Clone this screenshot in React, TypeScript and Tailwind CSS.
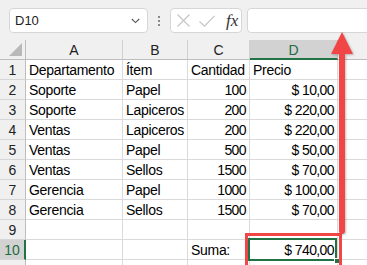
import React from "react";

const FONT = { fontFamily: '"Liberation Sans", Arial, sans-serif' };

type Row = { n: number; a: string; b: string; c: string; d: string };

const rows: Row[] = [
  { n: 1, a: "Departamento", b: "Ítem", c: "Cantidad", d: "Precio" },
  { n: 2, a: "Soporte", b: "Papel", c: "100", d: "$ 10,00" },
  { n: 3, a: "Soporte", b: "Lapiceros", c: "200", d: "$ 220,00" },
  { n: 4, a: "Ventas", b: "Lapiceros", c: "200", d: "$ 220,00" },
  { n: 5, a: "Ventas", b: "Papel", c: "500", d: "$ 50,00" },
  { n: 6, a: "Ventas", b: "Sellos", c: "1500", d: "$ 70,00" },
  { n: 7, a: "Gerencia", b: "Papel", c: "1000", d: "$ 100,00" },
  { n: 8, a: "Gerencia", b: "Sellos", c: "1500", d: "$ 70,00" },
  { n: 9, a: "", b: "", c: "", d: "" },
  { n: 10, a: "", b: "", c: "", d: "" },
  { n: 11, a: "", b: "", c: "", d: "" },
];

function Cell({ children, right = false, num = false }: { children?: React.ReactNode; right?: boolean; num?: boolean }) {
  return (
    <div
      className={
        "h-[20px] border-r border-b border-[#dadada] px-[3px] leading-[21px] whitespace-nowrap overflow-visible text-[14px] text-black " +
        (right ? "text-right " : "text-left ") +
        (num ? "tracking-[-0.6px]" : "tracking-[-0.3px]")
      }
    >
      {children}
    </div>
  );
}

export default function App() {
  return (
    <div className="relative w-[367px] h-[265px] overflow-hidden bg-white" style={FONT}>
      {/* Toolbar */}
      <div className="h-[40px] bg-[#f0f0f0] flex items-start pt-[8px] pl-[9px]">
        <div className="w-[139px] h-[25px] shrink-0 bg-white border border-[#d6d6d6] rounded-[4px] flex items-center justify-between pl-[5px] pr-[7px]">
          <span className="text-[13px] text-[#222] leading-none">D10</span>
          <svg width="9" height="6" viewBox="0 0 9 6">
            <path d="M0.8 1 L4.5 4.6 L8.2 1" fill="none" stroke="#555" strokeWidth="1.1" />
          </svg>
        </div>
        <div className="w-[22px] h-[25px] shrink-0 flex flex-col items-center justify-center gap-[2px]">
          <div className="w-[2px] h-[2px] bg-[#8a8a8a]" />
          <div className="w-[2px] h-[2px] bg-[#8a8a8a]" />
          <div className="w-[2px] h-[2px] bg-[#8a8a8a]" />
        </div>
        <div className="w-[72px] h-[25px] shrink-0 bg-white border border-[#d6d6d6] rounded-[4px] flex items-center pl-[6px]">
          <svg width="13" height="13" viewBox="0 0 13 13">
            <path d="M0.5 0.5 L12.5 12.5 M12.5 0.5 L0.5 12.5" stroke="#c4c4c4" strokeWidth="1.1" fill="none" />
          </svg>
          <svg width="16" height="12" viewBox="0 0 16 12" className="ml-[9px]">
            <path d="M0.5 6.5 L5.5 11.2 L15.5 0.8" stroke="#c4c4c4" strokeWidth="1.1" fill="none" />
          </svg>
          <span
            className="ml-[11px] text-[17px] italic text-[#333] leading-none"
            style={{ fontFamily: '"Liberation Serif", "Times New Roman", serif' }}
          >
            fx
          </span>
        </div>
        <div className="ml-[5px] w-[140px] h-[25px] shrink-0 bg-white border border-[#d6d6d6] rounded-l-[4px]" />
      </div>

      {/* Grid */}
      <div className="grid grid-cols-[26px_97px_65px_62px_88px_1fr]">
        {/* header row */}
        <div className="h-[20px] bg-[#f0f0f0] border-r border-b border-[#bdbdbd] relative">
          <svg width="14" height="14" viewBox="0 0 14 14" className="absolute right-[2px] bottom-[2px]">
            <path d="M13 0 L13 13 L0 13 Z" fill="#b9b9b9" />
          </svg>
        </div>
        {["A", "B", "C"].map((l) => (
          <div
            key={l}
            className="h-[20px] bg-[#f0f0f0] border-r border-r-[#d0d0d0] border-b border-b-[#bdbdbd] text-center text-[14px] leading-[21px] text-[#222]"
          >
            {l}
          </div>
        ))}
        <div className="h-[20px] bg-[#d2d2d2] border-r border-r-[#bdbdbd] border-b-2 border-b-[#217346] text-center text-[14px] leading-[21px] text-[#1e6b41]">
          D
        </div>
        <div className="h-[20px] bg-[#f0f0f0] border-b border-b-[#bdbdbd]" />

        {rows.map((r) => {
          const sel = r.n === 10;
          return (
            <React.Fragment key={r.n}>
              <div
                className={
                  "h-[20px] border-b border-b-[#d6d6d6] text-center text-[14px] leading-[21px] " +
                  (sel
                    ? "bg-[#d2d2d2] border-r-2 border-r-[#217346] text-[#1e6b41]"
                    : "bg-[#f0f0f0] border-r border-r-[#bdbdbd] text-[#222]")
                }
              >
                {r.n === 11 ? "" : r.n}
              </div>
              <Cell>{r.a}</Cell>
              <Cell>{r.b}</Cell>
              {r.n === 1 ? <Cell>{r.c}</Cell> : r.n === 10 ? <Cell>Suma:</Cell> : <Cell right num>{r.c}</Cell>}
              {r.n === 1 ? <Cell>{r.d}</Cell> : r.n === 10 ? <Cell right num>$ 740,00</Cell> : <Cell right num>{r.d}</Cell>}
              <div className="h-[20px] border-b border-[#dadada]" />
            </React.Fragment>
          );
        })}
      </div>

      {/* Selection of D10 */}
      <div className="absolute left-[248px] top-[238px] w-[89px] h-[23px] border-2 border-[#217346] pointer-events-none" />
      <div className="absolute left-[334px] top-[258px] w-[6px] h-[6px] bg-[#217346] border border-white pointer-events-none" />

      {/* Red annotation rectangle */}
      <div className="absolute left-[245px] top-[233px] w-[97px] h-[40px] border-[3px] border-[#f24646] pointer-events-none" />

      {/* Red arrow */}
      <svg
        width="367"
        height="265"
        viewBox="0 0 367 265"
        className="absolute left-0 top-0 pointer-events-none"
        style={{ filter: "drop-shadow(1px 1px 1px rgba(0,0,0,0.25))" }}
      >
        <path d="M342 32 L353 54 L331 54 Z" fill="#f24646" />
        <path d="M342 52 L342 231" stroke="#f24646" strokeWidth="6" strokeLinecap="round" />
      </svg>
    </div>
  );
}
